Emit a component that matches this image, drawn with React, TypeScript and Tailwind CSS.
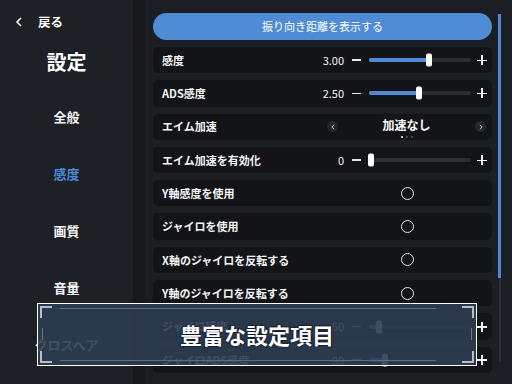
import React from 'react'

const menu = [
  { label: '全般' },
  { label: '感度', active: true },
  { label: '画質' },
  { label: '音量' },
  { label: 'クロスヘア' },
]

type Row =
  | { kind: 'slider'; label: string; value: string; pct: number }
  | { kind: 'select'; label: string; value: string }
  | { kind: 'toggle'; label: string }

const rows: Row[] = [
  { kind: 'slider', label: '感度', value: '3.00', pct: 59 },
  { kind: 'slider', label: 'ADS感度', value: '2.50', pct: 49 },
  { kind: 'select', label: 'エイム加速', value: '加速なし' },
  { kind: 'slider', label: 'エイム加速を有効化', value: '0', pct: 2 },
  { kind: 'toggle', label: 'Y軸感度を使用' },
  { kind: 'toggle', label: 'ジャイロを使用' },
  { kind: 'toggle', label: 'X軸のジャイロを反転する' },
  { kind: 'toggle', label: 'Y軸のジャイロを反転する' },
  { kind: 'slider', label: 'ジャイロ感度', value: '50', pct: 10 },
  { kind: 'slider', label: 'ジャイロADS感度', value: '80', pct: 16 },
]

function Slider({ value, pct }: { value: string; pct: number }) {
  return (
    <div className="flex h-full w-[170px] items-center">
      <span className="w-[22px] text-right text-[11px] text-gray-100">{value}</span>
      <span className="ml-[8px] h-[1.5px] w-[9px] bg-gray-200" />
      <div className="relative ml-[8px] h-[4px] w-[102px] rounded-sm bg-[#2a2d32]">
        <div className="h-full rounded-sm bg-[#4f8cd6]" style={{ width: `${pct}%` }} />
        <div
          className="absolute top-1/2 h-[13px] w-[6px] -translate-x-1/2 -translate-y-1/2 rounded-[2px] bg-white"
          style={{ left: `${pct}%` }}
        />
      </div>
      <span className="relative ml-[6px] h-[10px] w-[10px]">
        <span className="absolute left-0 top-[4.5px] h-[1.5px] w-[10px] bg-gray-100" />
        <span className="absolute left-[4.25px] top-0 h-[10px] w-[1.5px] bg-gray-100" />
      </span>
    </div>
  )
}

function Arrow({ dir }: { dir: 'left' | 'right' }) {
  return (
    <span className="flex h-[11px] w-[11px] items-center justify-center rounded-full bg-[#24282d]">
      <svg className="h-[6px] w-[4px]" viewBox="0 0 4 6" fill="none" aria-hidden="true">
        <path d={dir === 'left' ? 'M3 0.8L1 3l2 2.2' : 'M1 0.8L3 3 1 5.2'} stroke="#c9ccd1" strokeWidth="1" />
      </svg>
    </span>
  )
}

function Select({ value }: { value: string }) {
  return (
    <div className="flex h-full w-[170px] items-center">
      <span className="ml-[5px]">
        <Arrow dir="left" />
      </span>
      <div className="relative flex h-full flex-1 items-center justify-center">
        <span className="mb-[3px] text-[12px] font-bold text-white">{value}</span>
        <div className="absolute bottom-[2px] flex gap-[3px]">
          <span className="h-[2px] w-[2px] rounded-full bg-white" />
          <span className="h-[2px] w-[2px] rounded-full bg-gray-600" />
          <span className="h-[2px] w-[2px] rounded-full bg-gray-600" />
        </div>
      </div>
      <span className="mr-[6px]">
        <Arrow dir="right" />
      </span>
    </div>
  )
}

function Toggle() {
  return (
    <div className="flex h-full w-[170px] items-center justify-center">
      <span className="h-[13px] w-[13px] rounded-full border-[1.5px] border-gray-200" />
    </div>
  )
}

export default function App() {
  return (
    <div className="relative flex h-[384px] w-[512px] overflow-hidden bg-[#1b1e22] font-['Noto_Sans_CJK_JP',sans-serif] text-white">
      {/* Sidebar */}
      <aside className="flex w-[133px] flex-col bg-[#1d2125] pt-[13px]">
        <div className="flex h-[18px] items-center pl-[15px]">
          <svg className="h-[10px] w-[8px]" viewBox="0 0 8 10" fill="none" aria-hidden="true">
            <path d="M6 1L2 5l4 4" stroke="white" strokeWidth="1.5" />
          </svg>
          <span className="ml-[15px] text-[12.5px] font-bold">戻る</span>
        </div>
        <div className="mt-[17px] flex h-[28px] items-center justify-center text-[20px] font-bold">設定</div>
        <nav className="mt-[12px] flex flex-col">
          {menu.map((m) => (
            <div
              key={m.label}
              className={
                'flex h-[57px] items-center justify-center text-[13px] font-bold ' +
                (m.active ? 'text-[#4a8ad6]' : 'text-gray-100')
              }
            >
              {m.label}
            </div>
          ))}
        </nav>
      </aside>
      <div className="w-[12px] bg-[#16181b]" />

      {/* Main */}
      <main className="flex flex-1 pl-[8px] pt-[13px]">
        <div className="flex w-[339px] flex-col gap-[7px]">
          <button className="h-[27px] shrink-0 rounded-full bg-[#4f8cd6] text-[11px] text-white">
            振り向き距離を表示する
          </button>
          {rows.map((r) => (
            <div key={r.label} className="flex h-[26.3px] shrink-0 items-center rounded-[5px] bg-[#121417]">
              <span className="flex-1 pl-[9px] text-[11px] font-bold text-gray-100">{r.label}</span>
              {r.kind === 'slider' && <Slider value={r.value} pct={r.pct} />}
              {r.kind === 'select' && <Select value={r.value} />}
              {r.kind === 'toggle' && <Toggle />}
            </div>
          ))}
        </div>
        <div className="ml-[6px] mt-[1px] flex h-[348px] w-[3px] flex-col">
          <div className="h-[264px] bg-[#4a8ad6]" />
          <div className="mx-auto w-[2px] flex-1 bg-[#2b2f34]" />
        </div>
      </main>

      {/* Caption overlay */}
      <div className="absolute left-[37px] top-[303px] flex h-[63px] w-[440px] items-center justify-center border border-white bg-[#2d3c52]/90">
        <span className="absolute left-[2px] top-[2px] h-[12px] w-[12px] border-l-2 border-t-2 border-[#b9bec6]" />
        <span className="absolute right-[2px] top-[2px] h-[12px] w-[12px] border-r-2 border-t-2 border-[#b9bec6]" />
        <span className="absolute bottom-[2px] left-[2px] h-[12px] w-[12px] border-b-2 border-l-2 border-[#b9bec6]" />
        <span className="absolute bottom-[2px] right-[2px] h-[12px] w-[12px] border-b-2 border-r-2 border-[#b9bec6]" />
        <span className="absolute left-[22px] right-[40px] top-[4px] h-px bg-[#5d6d84]" />
        <span className="absolute bottom-[4px] left-[22px] right-[40px] h-px bg-[#5d6d84]" />
        <span className="absolute right-[4px] top-[24px] h-[12px] w-px bg-[#6b7a90]" />
        <span className="absolute left-[4px] top-[24px] h-[12px] w-px bg-[#6b7a90]" />
        <span className="text-[22px] font-bold text-white [text-shadow:0_0_2px_#0a1220,0_0_2px_#0a1220]">
          豊富な設定項目
        </span>
      </div>
    </div>
  )
}
